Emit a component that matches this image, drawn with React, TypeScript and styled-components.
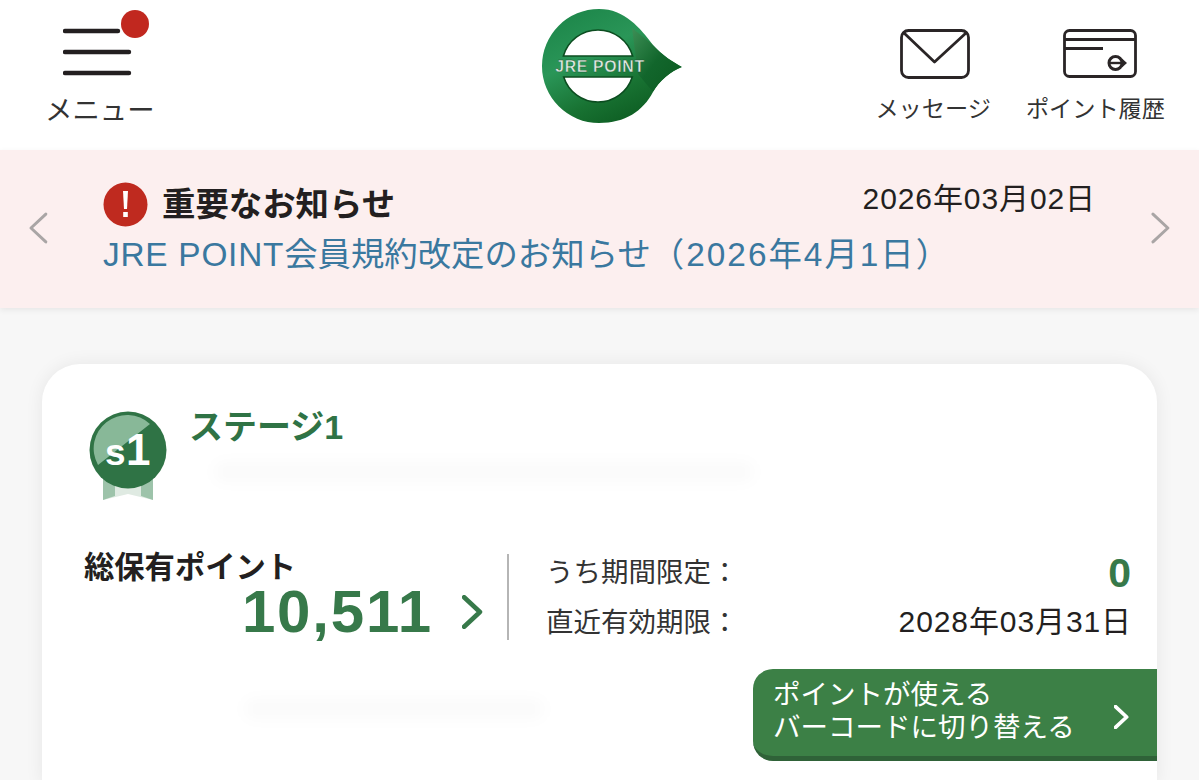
import React from "react";
import styled, { createGlobalStyle } from "styled-components";

const GREEN = "#37794a";
const INK = "#231f20";
const FONT = '"Liberation Sans", "Noto Sans CJK JP", sans-serif';

const Global = createGlobalStyle`
  html, body { margin: 0; padding: 0; height: 780px; overflow: hidden; background: #f7f7f7; }
  body { font-family: ${FONT}; color: ${INK}; }
  * { box-sizing: border-box; }
`;
const Page = styled.div`
  width: 1199px;
  height: 780px;
  overflow: hidden;
  display: flex;
  flex-direction: column;
`;
const Header = styled.header`
  height: 150px;
  flex: none;
  background: #fff;
  display: grid;
  grid-template-columns: 1fr auto 1fr;
  padding: 8px 34px 0 45px;
`;
const MenuButton = styled.div`
  justify-self: start;
  width: 112px;
  display: flex;
  flex-direction: column;
  align-items: flex-start;
`;
const BurgerSvg = styled.svg`
  margin-left: 18px;
`;
const MenuLabel = styled.span`
  font-size: 27.4px;
  line-height: 32px;
  margin-top: 15px;
  color: #333;
  white-space: nowrap;
`;
const LogoSvg = styled.svg`
  margin-left: 14px;
`;
const RightNav = styled.nav`
  justify-self: end;
  display: flex;
  gap: 35px;
`;
const NavItem = styled.div`
  display: flex;
  flex-direction: column;
  align-items: center;
  padding-top: 21px;
`;
const NavLabel = styled.span`
  font-size: 23.2px;
  line-height: 30px;
  margin-top: 15px;
  color: #333;
  white-space: nowrap;
`;
const Notice = styled.section`
  height: 158px;
  flex: none;
  background: #fcefef;
  box-shadow: 0 2px 6px rgba(0, 0, 0, 0.07);
  display: grid;
  grid-template-columns: 103px 1fr 105px;
  align-items: center;
`;
const Pager = styled.div<{ $side: "left" | "right" }>`
  display: flex;
  justify-content: ${(p) => (p.$side === "left" ? "flex-start" : "flex-end")};
  padding: 0 28px 2px;
`;
const NoticeBody = styled.div`
  display: flex;
  flex-direction: column;
`;
const NoticeTop = styled.div`
  display: flex;
  align-items: center;
  justify-content: space-between;
  height: 46px;
`;
const NoticeTitle = styled.div`
  display: flex;
  align-items: center;
  gap: 14px;
  font-size: 33.4px;
  font-weight: 700;
  color: ${INK};
`;
const NoticeTitleText = styled.span`
  margin-top: -5px;
`;
const NoticeDate = styled.span`
  font-size: 30px;
  letter-spacing: 0.9px;
  margin: -16px -2px 0 0;
  color: ${INK};
`;
const NoticeLink = styled.div`
  font-size: 33.4px;
  line-height: 44px;
  margin-top: 6px;
  color: #3a789f;
  white-space: nowrap;
`;
const LinkPart = styled.span<{ $track: number }>`
  letter-spacing: ${(p) => p.$track}px;
`;
const Card = styled.main`
  flex: none;
  margin: 56px 42px 0;
  background: #fff;
  border-radius: 38px 38px 0 0;
  height: 420px;
  box-shadow: 0 0 18px rgba(0, 0, 0, 0.07);
  padding: 46px 26px 0 42px;
  display: flex;
  flex-direction: column;
`;
const StageRow = styled.div`
  display: flex;
  gap: 22px;
  margin-left: 4px;
  height: 144px;
`;
const BadgeSvg = styled.svg`
  flex: none;
`;
const StageInfo = styled.div`
  display: flex;
  flex-direction: column;
`;
const StageName = styled.div`
  font-size: 34px;
  line-height: 36px;
  font-weight: 700;
  color: #2f7345;
  margin: -1px 0 1px -1px;
`;
const Smudge = styled.div<{ $w: number }>`
  height: 20px;
  width: ${(p) => p.$w}px;
  margin: 16px 0 0 24px;
  background: rgba(0, 0, 0, 0.018);
  filter: blur(7px);
  border-radius: 10px;
`;
const Metrics = styled.div`
  display: grid;
  grid-template-columns: 425px 1fr;
  align-items: start;
  height: 87px;
`;
const TotalBlock = styled.div`
  border-right: 2px solid #b5b5b5;
  height: 86px;
  display: flex;
  flex-direction: column;
`;
const TotalLabel = styled.div`
  font-size: 30.3px;
  line-height: 30px;
  font-weight: 700;
  margin-top: -1px;
  color: ${INK};
`;
const TotalValueRow = styled.div`
  display: flex;
  align-items: center;
  justify-content: flex-end;
  gap: 29px;
  padding-right: 24px;
`;
const TotalValue = styled.div`
  font-size: 60px;
  line-height: 58px;
  font-weight: 700;
  letter-spacing: 1.8px;
  color: ${GREEN};
`;
const Details = styled.div`
  padding-left: 37px;
  margin-top: -4px;
  display: flex;
  flex-direction: column;
  gap: 10px;
`;
const DetailRow = styled.div`
  display: flex;
  justify-content: space-between;
  align-items: center;
  height: 40px;
`;
const DetailKey = styled.span`
  font-size: 27.5px;
  color: #333;
  white-space: nowrap;
`;
const DetailZero = styled.span`
  font-size: 41px;
  font-weight: 700;
  color: ${GREEN};
  margin-top: 6px;
`;
const DetailDate = styled.span`
  font-size: 30px;
  letter-spacing: 0.9px;
  margin: -2px -1px 0 0;
  color: ${INK};
`;
const BarcodeButton = styled.div`
  align-self: flex-end;
  width: 404px;
  height: 92px;
  margin: 28px -26px 0 0;
  background: #3c8046;
  border-bottom: 5px solid #2f6238;
  border-radius: 20px 0 0 20px;
  color: #fff;
  font-size: 27.5px;
  line-height: 33px;
  padding: 8px 28px 0 20px;
  display: flex;
  justify-content: space-between;
  align-items: center;
`;
const BarcodeText = styled.div`
  margin-top: -11px;
  white-space: nowrap;
`;
const LowerSmudge = styled(Smudge)`
  margin: -62px 0 0 160px;
`;

const Burger = () => (
  <BurgerSvg width="104" height="72" viewBox="0 0 104 72">
    <g stroke="#231f20" strokeWidth="4.4" strokeLinecap="round">
      <line x1="2" y1="23" x2="55" y2="23" />
      <line x1="2" y1="44" x2="66" y2="44" />
      <line x1="2" y1="65" x2="66" y2="65" />
    </g>
    <circle cx="72" cy="16" r="14" fill="#c1281f" />
  </BurgerSvg>
);

const Logo = () => (
  <LogoSvg width="144" height="118" viewBox="0 0 144 118">
    <defs>
      <linearGradient id="ring" x1="0.1" y1="0" x2="0.7" y2="1">
        <stop offset="0" stopColor="#1b8448" />
        <stop offset="0.4" stopColor="#2a9658" />
        <stop offset="0.72" stopColor="#187232" />
        <stop offset="1" stopColor="#0c5a20" />
      </linearGradient>
      <linearGradient id="tip" x1="0" y1="0" x2="1" y2="1">
        <stop offset="0" stopColor="#3d8f56" />
        <stop offset="0.5" stopColor="#12662c" />
        <stop offset="1" stopColor="#0c5a20" />
      </linearGradient>
      <clipPath id="shape">
        <path d="M59 1C85 1 100 20 113 37C122 47 133 54 142 59C130 64 120 72 113 84C103 103 85 115 59 115A57 57 0 1 1 59 1Z" />
      </clipPath>
    </defs>
    <path
      d="M59 1C85 1 100 20 113 37C122 47 133 54 142 59C130 64 120 72 113 84C103 103 85 115 59 115A57 57 0 1 1 59 1Z"
      fill="url(#ring)"
    />
    <path d="M92 20L113 37C122 47 133 54 142 59C130 64 120 72 113 84L98 66Z" fill="url(#tip)" clipPath="url(#shape)" />
    <path d="M23.4 48A36 36 0 0 1 92.6 48Z" fill="#fff" stroke="#0c4d20" strokeWidth="1.6" />
    <path d="M23.7 69A36 36 0 0 0 92.3 69Z" fill="#fff" stroke="#0c4d20" strokeWidth="1.6" />
    <text
      x="60"
      y="64"
      textAnchor="middle"
      fontFamily="'Liberation Sans', sans-serif"
      fontWeight="700"
      fontSize="15.8"
      letterSpacing="0.7"
      fill="#dfeae2"
      stroke="#174f2a"
      strokeWidth="0.35"
    >
      JRE POINT
    </text>
  </LogoSvg>
);

const MailIcon = () => (
  <svg width="74" height="50" viewBox="-4 0 74 50" fill="none" stroke="#2a2526" strokeWidth="2.8">
    <rect x="1.5" y="1.5" width="67" height="47" rx="7" />
    <path d="M4 4L34.5 33L66 4" strokeLinejoin="round" />
  </svg>
);

const PointCardIcon = () => (
  <svg width="84" height="50" viewBox="-10 0 84 50" fill="none" stroke="#2a2526" strokeWidth="2.8">
    <rect x="1.5" y="1.5" width="71" height="46" rx="5" />
    <line x1="2" y1="10.5" x2="72" y2="10.5" />
    <line x1="2" y1="19.5" x2="40" y2="19.5" />
    <circle cx="52.5" cy="34" r="6.5" strokeWidth="3" />
    <line x1="46" y1="34" x2="59" y2="34" strokeWidth="2.4" />
    <path d="M59 29.5L64 34L59 38.5Z" fill="#2a2526" stroke="none" />
  </svg>
);

const Alert = () => (
  <svg width="45" height="45" viewBox="0 0 45 45">
    <circle cx="22.5" cy="22.5" r="22" fill="#bf2a1f" />
    <path d="M20 9H25L24 27H21Z" fill="#fff" />
    <rect x="20.2" y="30" width="4.6" height="5" fill="#fff" />
  </svg>
);

const Chevron = ({ dir, size, color, w }: { dir: "l" | "r"; size: number; color: string; w: number }) => (
  <svg width={size * 0.62} height={size} viewBox="0 0 20 32" fill="none" stroke={color} strokeWidth={w} strokeLinecap="round" strokeLinejoin="round">
    <path d={dir === "l" ? "M18 2L3 16L18 30" : "M2 2L17 16L2 30"} />
  </svg>
);

const Badge = () => (
  <BadgeSvg width="80" height="92" viewBox="0 0 80 92">
    <path d="M15 66V90L40 84L65 90V66Z" fill="#dfeae2" />
    <path d="M15 66H27V86L15 90Z" fill="#9dc3aa" />
    <path d="M65 66H53V86L65 90Z" fill="#9dc3aa" />
    <circle cx="40" cy="40" r="38.5" fill="#2f7345" />
    <path d="M10 55A33.5 33.5 0 0 1 62 14Z" fill="#88b898" />
    <text x="17" y="55" fontFamily="'Liberation Sans', sans-serif" fontWeight="700" fontSize="37" fill="#fff">s</text>
    <text x="38" y="55" fontFamily="'Liberation Sans', sans-serif" fontWeight="700" fontSize="44" fill="#fff">1</text>
  </BadgeSvg>
);

export default function App() {
  return (
    <Page>
      <Global />
      <Header>
        <MenuButton>
          <Burger />
          <MenuLabel>メニュー</MenuLabel>
        </MenuButton>
        <Logo />
        <RightNav>
          <NavItem>
            <MailIcon />
            <NavLabel>メッセージ</NavLabel>
          </NavItem>
          <NavItem>
            <PointCardIcon />
            <NavLabel>ポイント履歴</NavLabel>
          </NavItem>
        </RightNav>
      </Header>
      <Notice>
        <Pager $side="left">
          <Chevron dir="l" size={32} color="#a9a5a5" w={3} />
        </Pager>
        <NoticeBody>
          <NoticeTop>
            <NoticeTitle>
              <Alert />
              <NoticeTitleText>重要なお知らせ</NoticeTitleText>
            </NoticeTitle>
            <NoticeDate>2026年03月02日</NoticeDate>
          </NoticeTop>
          <NoticeLink>
            <LinkPart $track={0.75}>JRE POINT</LinkPart>
            <LinkPart $track={0}>会員規約改定のお知らせ</LinkPart>
            <LinkPart $track={2}>（2026年4月1日）</LinkPart>
          </NoticeLink>
        </NoticeBody>
        <Pager $side="right">
          <Chevron dir="r" size={32} color="#a9a5a5" w={3} />
        </Pager>
      </Notice>
      <Card>
        <StageRow>
          <Badge />
          <StageInfo>
            <StageName>ステージ1</StageName>
            <Smudge $w={540} />
          </StageInfo>
        </StageRow>
        <Metrics>
          <TotalBlock>
            <TotalLabel>総保有ポイント</TotalLabel>
            <TotalValueRow>
              <TotalValue>10,511</TotalValue>
              <Chevron dir="r" size={34} color={GREEN} w={4.4} />
            </TotalValueRow>
          </TotalBlock>
          <Details>
            <DetailRow>
              <DetailKey>うち期間限定：</DetailKey>
              <DetailZero>0</DetailZero>
            </DetailRow>
            <DetailRow>
              <DetailKey>直近有効期限：</DetailKey>
              <DetailDate>2028年03月31日</DetailDate>
            </DetailRow>
          </Details>
        </Metrics>
        <BarcodeButton>
          <BarcodeText>
            ポイントが使える
            <br />
            バーコードに切り替える
          </BarcodeText>
          <Chevron dir="r" size={24} color="#fff" w={5} />
        </BarcodeButton>
        <LowerSmudge $w={300} />
      </Card>
    </Page>
  );
}
